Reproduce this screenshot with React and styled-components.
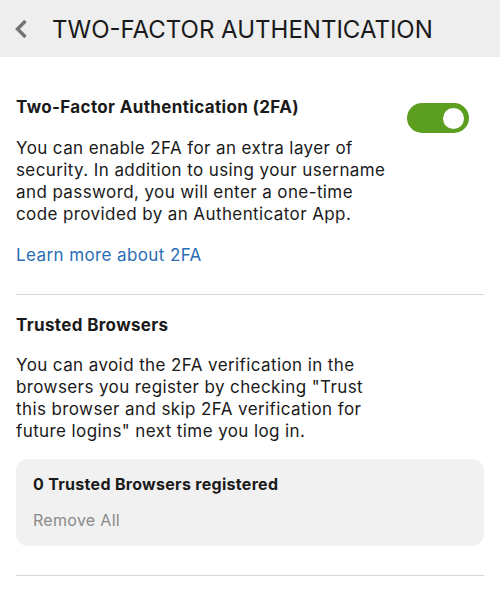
import React from 'react';
import styled, { createGlobalStyle } from 'styled-components';

const GlobalStyle = createGlobalStyle`
  body {
    margin: 0;
    background: #ffffff;
    font-family: Inter, "Noto Sans", Arial, sans-serif;
    color: #1a1a1a;
  }
`

const Header = styled.div`
  height: 57px;
  background: #eeeeee;
  display: flex;
  align-items: center;
  padding-left: 14px;
  gap: 24px;
`

const BackButton = styled.button`
  background: none;
  border: 0;
  padding: 0;
  width: 14px;
  height: 20px;
  display: flex;
  align-items: center;
  cursor: pointer;
`

const Title = styled.h1`
  margin: 0 0 -2px;
  font-size: 24px;
  font-weight: 400;
  letter-spacing: 0;
  color: #1a1a1a;
`

const Content = styled.div`
  padding: 0 16px;
`

const Section = styled.section`
  padding: ${p => p.$top}px 0 ${p => p.$bottom}px;
  border-bottom: 1px solid #d6d6d6;
`

const SectionHead = styled.div`
  display: flex;
  align-items: flex-start;
  justify-content: space-between;
`

const SectionTitle = styled.h2`
  margin: 0;
  font-size: 17px;
  font-weight: 700;
  line-height: 24px;
  letter-spacing: 0.35px;
`

const Text = styled.p`
  margin: ${p => p.$top}px 0 0;
  font-size: 17px;
  line-height: 22px;
  letter-spacing: 0.4px;
  max-width: ${p => p.$max}px;
`

const Link = styled.a`
  display: inline-block;
  margin-top: 19px;
  font-size: 17px;
  line-height: 22px;
  letter-spacing: 0.4px;
  color: #2a6db5;
  text-decoration: none;
`

const Toggle = styled.div`
  width: 62px;
  height: 30px;
  border-radius: 15px;
  background: #5c9e1f;
  display: flex;
  align-items: center;
  justify-content: flex-end;
  padding: 0 5px;
  box-sizing: border-box;
  margin: 8px 15px 0 0;
`

const Knob = styled.span`
  width: 21px;
  height: 21px;
  border-radius: 50%;
  background: #ffffff;
`

const Card = styled.div`
  margin-top: 17px;
  background: #f1f1f1;
  border-radius: 12px;
  padding: 14px 17px 16px;
`

const CardTitle = styled.div`
  font-size: 16px;
  font-weight: 700;
  line-height: 22px;
  letter-spacing: 0.3px;
`

const CardAction = styled.button`
  display: block;
  margin-top: 15px;
  padding: 0;
  border: 0;
  background: none;
  font-family: inherit;
  font-size: 16px;
  line-height: 20px;
  letter-spacing: 0.3px;
  color: #8a8a8a;
`

export default function App() {
  return (
    <>
      <GlobalStyle />
      <Header>
        <BackButton aria-label="Back">
          <svg width="14" height="20" viewBox="0 0 14 20">
            <path d="M11.5 2 L3.5 10 L11.5 18" fill="none" stroke="#737373" strokeWidth="3.4" />
          </svg>
        </BackButton>
        <Title>TWO-FACTOR AUTHENTICATION</Title>
      </Header>
      <Content>
        <Section $top={38} $bottom={28}>
          <SectionHead>
            <SectionTitle>Two-Factor Authentication (2FA)</SectionTitle>
            <Toggle><Knob /></Toggle>
          </SectionHead>
          <Text $top={4} $max={372}>
            You can enable 2FA for an extra layer of security. In addition to using your username and password, you will enter a one-time code provided by an Authenticator App.
          </Text>
          <Link href="#">Learn more about 2FA</Link>
        </Section>
        <Section $top={18} $bottom={29}>
          <SectionTitle>Trusted Browsers</SectionTitle>
          <Text $top={17} $max={360}>
            You can avoid the 2FA verification in the browsers you register by checking "Trust this browser and skip 2FA verification for future logins" next time you log in.
          </Text>
          <Card>
            <CardTitle>0 Trusted Browsers registered</CardTitle>
            <CardAction>Remove All</CardAction>
          </Card>
        </Section>
      </Content>
    </>
  )
}
